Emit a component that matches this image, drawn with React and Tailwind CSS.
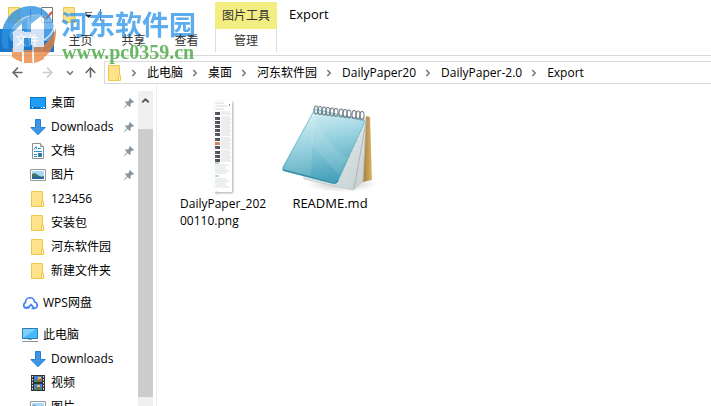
import { ChevronRight, ChevronUp, ChevronDown, ArrowLeft, ArrowRight, ArrowUp } from 'lucide-react';

const FolderIcon = ({ className = '' }) => (
    <svg viewBox="0 0 14 16" className={`h-4 w-3.5 ${className}`} aria-hidden="true">
        <path d="M.5.5h11v15H.5z" fill="#ffe28a" stroke="#ecc748" />
        <path d="M10.5 10.5h2v5h-2z" fill="#fff0b8" stroke="#ecc748" />
    </svg>
);

const DesktopIcon = () => (
    <svg viewBox="0 0 16 16" className="size-4" aria-hidden="true">
        <path d="M0 2h16v12H0z" fill="#0877c9" />
        <path d="M1 3h14v9H1z" fill="#1d9df6" />
        <path d="M2 12.5h1M11 12.5h1M13 12.5h2" stroke="#fff" />
    </svg>
);

const DownloadIcon = () => (
    <svg viewBox="0 0 16 16" className="size-4" aria-hidden="true">
        <path d="M5.5.5h5v8h4.7L8 15.7.8 8.5h4.7z" fill="#3d97e5" stroke="#2180d0" />
    </svg>
);

const DocumentIcon = () => (
    <svg viewBox="0 0 16 16" className="size-4" aria-hidden="true">
        <path d="M2.5.5h8l3 3v12h-11z" fill="#fff" stroke="#8a9298" />
        <path d="M10.5.5v3h3" fill="#e8ecef" stroke="#8a9298" />
        <path d="M4 6.5l2-3 1 3M8 5.5h3M4 8.5h8M4 11.5h3M4 13.5h3" fill="none" stroke="#2c90d6" />
        <path d="M8 10h4v4H8z" fill="#2f79b5" />
        <path d="M8 13h4v1H8z" fill="#4a8a58" />
    </svg>
);

const PictureIcon = () => (
    <svg viewBox="0 0 16 16" className="size-4" aria-hidden="true">
        <path d="M.5 2.5h15v11H.5z" fill="#fff" stroke="#929a9f" />
        <path d="M2 4h12v8H2z" fill="#a9d9f7" />
        <path d="M2 7q3-2 6 1t6 1v3H2z" fill="#447663" />
        <path d="M2 10q6-1 12 0v2H2z" fill="#28649c" />
    </svg>
);

const CloudIcon = () => (
    <svg viewBox="0 0 16 16" className="size-4" aria-hidden="true">
        <path d="M6.5 11.5L4.5 13.2A3 3 0 0 1 3.5 7.500a4.500 4.500 0 0 1 9-.5 3.300 3.300 0 0 1 0 6.500H9.500M6 13.500L9 9.500l3 3.500" fill="none" stroke="#3e7ff1" strokeWidth="1.7" />
    </svg>
);

const ComputerIcon = () => (
    <svg viewBox="0 0 16 16" className="size-4" aria-hidden="true">
        <path d="M.5 1.5h15v10H.5z" fill="#45baf7" stroke="#277db4" />
        <path d="M1 11L14 2H1z" fill="#7cd2fb" />
        <path d="M6 12h4v1H6z" fill="#97a5ae" />
        <path d="M0 14.5h16" stroke="#8195a3" />
    </svg>
);

const VideoIcon = () => (
    <svg viewBox="0 0 16 16" className="size-4" aria-hidden="true">
        <path d="M1 0h14v16H1z" fill="#333" />
        <path d="M4 1h8v6H4zM4 9h8v6H4z" fill="#477fd2" />
        <path d="M8 2h3v3H8zM7 10h3v2H7z" fill="#f1bd35" />
        <path d="M5 5h6v2H5zM5 13h6v2H5z" fill="#4c893d" />
        <path d="M9 4h2v2H9zM8 12h2v1H8z" fill="#d44732" />
        <path d="M2.5 1v15M13.5 1v15" stroke="#eee" strokeDasharray="1.5 1.5" />
    </svg>
);

const PinIcon = () => (
    <svg viewBox="0 0 12 12" className="size-3" aria-hidden="true">
        <path d="M7 1l4 4-1 1-1-.4L7.5 7l.2 2-1 1L4.7 8 1.5 11H1v-.5L4 7.3 2 5.3l1-1 2 .2L6.4 3 6 2z" fill="#8b979f" />
    </svg>
);

const WatermarkLogo = () => (
    <svg viewBox="0 0 58 58" className="size-[58px]" aria-hidden="true">
        <path d="M3 43C-3 22 10 1 31 1c11 0 19 7 22 17-5-7-12-9-20-8C21 11 14 19 9 30c-1 5-1 9 0 14z" fill="#2d91e2" />
        <path d="M9 30C14 17 26 9 39 10c7 1 11 4 14 8 2 7 0 13-3 18H11z" fill="#5aa9e8" />
        <path d="M56 23c1 15-5 28-19 33V44c8-4 15-10 19-21z" fill="#e98039" />
        <path d="M12 43h10v14q-5-1-10-5zM24 45h9v13h-9zM34 39h10v15q-5 3-10 4z" fill="#ea8943" />
        <path d="M12 28l12-11v27H13V29z" fill="#fff" />
        <path d="M31 19l10-8 3 3v26H31z" fill="#fff" />
        <path d="M13 42h10v5H13zM33 38h11v4H33zM22 27h10v6H22z" fill="#fff" />
        <path d="M22 17l5-4v13h-5zM24 33h7v9h-7z" fill="#3795e2" />
        <path d="M23 34v23M33 34v23M44 35c5-3 9-8 11-14" fill="none" stroke="#fff" strokeWidth="1.5" />
    </svg>
);

const PaperPreview = () => (
    <svg viewBox="0 0 22 94" className="h-[94px] w-[22px] drop-shadow-[1px_1px_1px_#aaa]" aria-hidden="true">
        <path d="M1 1h18v91H1z" fill="#fff" />
        <path d="M2 3h9M2 6h12M2 9h9M2 92h3" stroke="#d4d7d8" />
        <path d="M16 5h1" stroke="#65b6a1" strokeWidth="2" />
        {[12, 17, 21, 25, 29, 33, 38, 42, 46, 51, 55, 59].map((y, i) => (
            <g key={y}>
                <path d={`M2 ${y}h5v3H2z`} fill={i === 7 ? '#d88e63' : '#48535f'} />
                <path d={`M2 ${y + 2}h2`} stroke="#a96264" />
                <path d={`M8 ${y}h9M8 ${y + 2}h10`} stroke="#c8cccf" strokeWidth=".7" />
            </g>
        ))}
        {[65, 67, 69, 71, 73, 79, 81, 83, 85, 87].map((y, i) => (
            <path key={y} d={`M2 ${y}h${i % 3 === 0 ? 14 : 11}`} stroke="#ced2d4" strokeWidth=".7" />
        ))}
        <path d="M2 63h4M2 76h4" stroke="#6eb7a5" />
    </svg>
);

const NotepadIcon = () => (
    <svg viewBox="0 0 96 90" className="h-[90px] w-24" aria-hidden="true">
        <defs>
            <linearGradient id="cover" x1="0.3" y1="0" x2="0.5" y2="1">
                <stop stopColor="#d9f2f7" />
                <stop offset=".45" stopColor="#94d0de" />
                <stop offset="1" stopColor="#429fb8" />
            </linearGradient>
            <linearGradient id="pages" x2="1" y2="1">
                <stop stopColor="#fff" />
                <stop offset="1" stopColor="#c6ccce" />
            </linearGradient>
            <linearGradient id="back">
                <stop stopColor="#80602a" />
                <stop offset="1" stopColor="#dcb566" />
            </linearGradient>
            <radialGradient id="shade">
                <stop stopColor="#888" stopOpacity=".5" />
                <stop offset="1" stopColor="#888" stopOpacity="0" />
            </radialGradient>
        </defs>
        <ellipse cx="60" cy="80" rx="35" ry="8" fill="url(#shade)" />
        <path d="M84 12l4 1 2 63-14 3z" fill="url(#back)" />
        <path d="M36 8l48 7-3 62-10 9-49-11v-3z" fill="url(#pages)" stroke="#bcc5c9" strokeWidth=".7" />
        <path d="M84 18L72 85" stroke="#aab4b8" />
        <path d="M79 27l3 1M77 32l4 1M74 37l6 1M72 42l7 1M69 47l9 2M67 52l10 2M65 57l11 3M62 62l13 3M60 67l14 3M58 72l15 3M55 77l17 4M24 74l45 9" stroke="#b8dfe6" strokeWidth=".8" />
        <path d="M33 5l50 12-27 60q-1 3-4 2L3 67q-4-1-2-4z" fill="url(#cover)" stroke="#63b3c7" strokeWidth=".8" />
        <path d="M31 10q13 30 34 44l-8 17L29 40z" fill="#fff" opacity=".1" />
        <path d="M33 5L29 72 2 65z" fill="#fff" opacity=".1" />
        <path d="M1 66l50 13q3 1 5-3" fill="none" stroke="#378da5" strokeWidth="1.3" />
        {[34, 38, 42, 46, 50, 54, 59, 63, 67, 72, 76, 80].map((x, i) => (
            <g key={x} fill="none">
                <ellipse cx={x} cy={6 + i * 0.5} rx="2" ry="4" stroke="#6c7880" strokeWidth="1.1" />
                <path d={`M${x - 1} ${4 + i * 0.5}q2-2 3 1`} stroke="#d7dee1" strokeWidth=".8" />
            </g>
        ))}
    </svg>
);

const quickAccess = [
    { name: '桌面', icon: <DesktopIcon />, pinned: true },
    { name: 'Downloads', icon: <DownloadIcon />, pinned: true },
    { name: '文档', icon: <DocumentIcon />, pinned: true },
    { name: '图片', icon: <PictureIcon />, pinned: true },
    { name: '123456', icon: <FolderIcon /> },
    { name: '安装包', icon: <FolderIcon /> },
    { name: '河东软件园', icon: <FolderIcon /> },
    { name: '新建文件夹', icon: <FolderIcon /> },
];

const computerItems = [
    { name: 'Downloads', icon: <DownloadIcon /> },
    { name: '视频', icon: <VideoIcon /> },
    { name: '图片', icon: <PictureIcon /> },
];

const path = ['此电脑', '桌面', '河东软件园', 'DailyPaper20', 'DailyPaper-2.0', 'Export'];

const SidebarItem = ({ item, root }) => (
    <a href="#" className={`flex h-6 items-center gap-1 pr-[3px] ${root ? 'pl-[22px]' : 'pl-[30px]'}`}>
        <span className="flex w-4 justify-center">{item.icon}</span>
        <span className="flex-1 whitespace-nowrap pl-px">{item.name}</span>
        {item.pinned && <PinIcon />}
    </a>
);

const Header = () => (
    <header className="relative h-14 border-b border-[#d9d9d9]">
        <div className="flex h-[29px] items-end">
            <div className="flex h-full w-[215px] items-center gap-2 pl-2">
                <FolderIcon />
                <span className="h-3 w-px bg-gray-500" />
                <svg viewBox="0 0 12 16" className="ml-0.5 h-4 w-3" aria-hidden="true">
                    <path d="M.5.5h11v15H.5z" fill="#fff" stroke="#777" />
                    <path d="M2 9l3 3 6-7" fill="none" stroke="#e65132" strokeWidth="2" />
                </svg>
                <FolderIcon className="ml-0.5" />
                <svg viewBox="0 0 7 6" className="relative z-10 h-1.5 w-[7px]" aria-hidden="true">
                    <path d="M0 .5h7M1 3h5L3.5 5.5z" fill="#222" stroke="#222" strokeWidth=".7" />
                </svg>
                <span className="h-3 w-px bg-gray-500" />
            </div>
            <div className="flex h-[27px] w-[62px] items-center justify-center bg-[#f2ee82] text-[#333]">图片工具</div>
            <h1 className="h-[27px] pl-3 text-[13px] leading-6">Export</h1>
        </div>
        <nav className="flex h-[23px] items-center text-[#333]">
            <button type="button" className="h-full w-[54px] bg-[#1976c8] text-white">文件</button>
            <button type="button" className="relative z-10 h-full w-[53px]">主页</button>
            <button type="button" className="relative z-10 h-full w-[53px]">共享</button>
            <button type="button" className="relative z-10 mr-[2px] h-full w-[53px]">查看</button>
            <button type="button" className="h-full w-[62px] border-x border-[#ddd]">管理</button>
        </nav>
        <div className="pointer-events-none absolute left-0 top-[5px] flex gap-[3px] opacity-80">
            <WatermarkLogo />
            <div className="whitespace-nowrap font-bold">
                <div className="font-['Noto_Sans_CJK_SC',sans-serif] text-[27px] leading-[38px] text-[#3599ea]">河东软件园</div>
                <div className="pl-px font-['Liberation_Serif',serif] text-[20px] leading-[18px] text-[#45a63f]">www.pc0359.cn</div>
            </div>
        </div>
    </header>
);

const AddressBar = () => (
    <div className="mt-[5px] flex h-[23px] items-center">
        <div className="flex w-[104px] shrink-0 items-center pl-2.5">
            <button type="button" aria-label="Back"><ArrowLeft size={15} color="#666" strokeWidth={2.5} /></button>
            <button type="button" aria-label="Forward" className="ml-[15px]"><ArrowRight size={15} color="#ccc" strokeWidth={2.5} /></button>
            <button type="button" aria-label="Recent locations" className="ml-2.5"><ChevronDown size={10} color="#777" strokeWidth={4} /></button>
            <button type="button" aria-label="Up" className="ml-2"><ArrowUp size={15} color="#666" strokeWidth={2.5} /></button>
        </div>
        <nav className="flex h-full flex-1 items-center whitespace-nowrap border-y border-l border-[#d9d9d9] pl-[3px]">
            <FolderIcon />
            {path.map((part) => (
                <span key={part} className="flex items-center">
                    <ChevronRight size={10} color="#777" strokeWidth={4} className="ml-[7px] mr-2" />
                    <a href="#">{part}</a>
                </span>
            ))}
        </nav>
    </div>
);

const Sidebar = () => (
    <aside className="flex w-[157px] shrink-0 border-r border-[#eee] pt-[7px]">
        <div className="w-[138px]">
            {quickAccess.map((item) => <SidebarItem key={item.name} item={item} />)}
            <div className="my-2"><SidebarItem item={{ name: 'WPS网盘', icon: <CloudIcon /> }} root /></div>
            <SidebarItem item={{ name: '此电脑', icon: <ComputerIcon /> }} root />
            {computerItems.map((item) => <SidebarItem key={item.name} item={item} />)}
        </div>
        <div className="flex w-[15px] flex-col bg-[#f0f0f0] pb-[9px]">
            <button type="button" aria-label="Scroll up" className="flex h-[38px] justify-center pt-1">
                <ChevronUp size={11} color="#555" strokeWidth={4} />
            </button>
            <div className="flex-1 bg-[#cdcdcd]" />
        </div>
    </aside>
);

const App = () => (
    <div className="flex h-screen flex-col overflow-hidden bg-white font-['Open_Sans','Noto_Sans_CJK_SC',sans-serif] text-[12px] leading-4 text-black">
        <Header />
        <AddressBar />
        <div className="flex min-h-0 flex-1">
            <Sidebar />
            <main className="flex flex-1 gap-2.5 pl-[19px] pt-4">
                <figure className="flex w-24 flex-col items-center">
                    <PaperPreview />
                    <figcaption className="mt-px w-[88px] break-all leading-[17px]">DailyPaper_20200110.png</figcaption>
                </figure>
                <figure className="flex w-24 flex-col items-center pt-1">
                    <NotepadIcon />
                    <figcaption className="mt-px text-[13px] leading-[17px]">README.md</figcaption>
                </figure>
            </main>
        </div>
    </div>
);

export default App;
